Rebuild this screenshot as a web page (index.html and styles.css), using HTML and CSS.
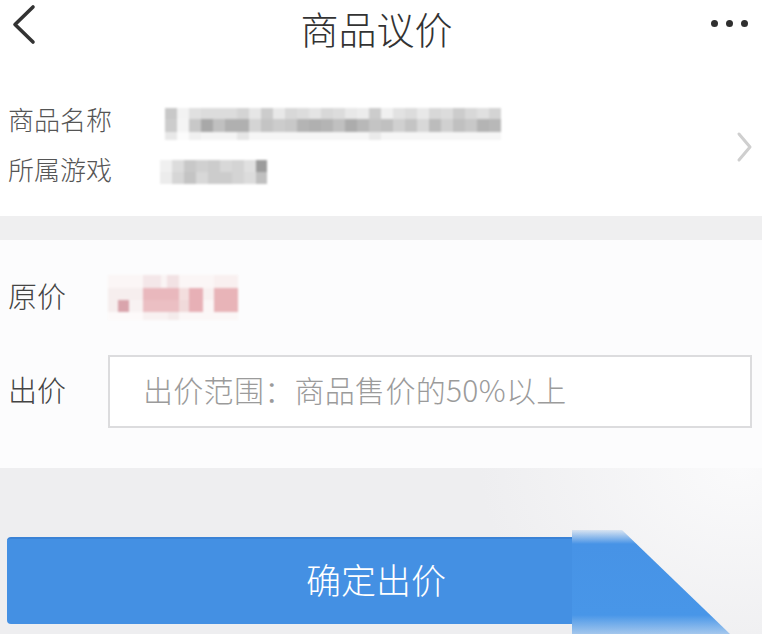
FILE: index.html
```html
<!DOCTYPE html>
<html lang="zh-CN">
<head>
<meta charset="utf-8">
<title>商品议价</title>
<link rel="stylesheet" href="styles.css">
</head>
<body>
<div class="page">
  <header class="topbar">
    <span class="back">
      <svg width="30" height="46" viewBox="0 0 30 46"><polyline points="25,3 7,20.5 25,38" fill="none" stroke="#333" stroke-width="3.6" stroke-linecap="round" stroke-linejoin="round"/></svg>
    </span>
    <h1 class="title">商品议价</h1>
    <span class="more">
      <i></i><i></i><i></i>
    </span>
  </header>

  <section class="info">
    <div class="info-rows">
      <div class="row">
        <span class="label">商品名称</span>
        <span class="mosaic name-mosaic"><b class="r1"></b><b class="r2"></b><b class="r3"></b></span>
      </div>
      <div class="row">
        <span class="label">所属游戏</span>
        <span class="mosaic game-mosaic"><b class="r1"></b><b class="r2"></b></span>
      </div>
    </div>
    <svg class="arrow" width="20" height="32" viewBox="0 0 20 32"><polyline points="5,3 16,16 5,29" fill="none" stroke="#cfcfcf" stroke-width="3" stroke-linecap="round" stroke-linejoin="round"/></svg>
  </section>

  <div class="band"></div>

  <section class="offer">
    <div class="orow price-row">
      <span class="olabel">原价</span>
      <span class="mosaic price-mosaic"><b class="r1"></b><b class="r2"></b><b class="r3"></b><b class="r4"></b></span>
    </div>
    <div class="orow">
      <span class="olabel">出价</span>
      <div class="input">出价范围：商品售价的50%以上</div>
    </div>
  </section>

  <footer class="bottom">
    <div class="submit-wrap">
      <button class="submit">确定出价</button>
      <span class="wedge"></span>
    </div>
  </footer>
</div>
</body>
</html>
```

FILE: styles.css
```css
* { box-sizing: border-box; }
html, body { margin: 0; padding: 0; }
body {
  width: 762px;
  height: 634px;
  overflow: hidden;
  font-family: "Noto Sans CJK SC", "Noto Sans", sans-serif;
  font-weight: 300;
  background: #eeeef0;
}
.page { display: flex; flex-direction: column; height: 634px; }

.topbar {
  height: 60px;
  background: #fff;
  display: flex;
  align-items: flex-start;
  justify-content: space-between;
  padding: 0 14px 0 8px;
}
.back { display: flex; width: 30px; height: 46px; margin-top: 4px; }
.title {
  margin: 0;
  font-size: 38px;
  font-weight: 300;
  color: #333;
  line-height: normal;
  position: relative;
  left: 2px;
}
.more { display: flex; gap: 8px; margin-top: 20px; }
.more i { width: 7px; height: 7px; border-radius: 50%; background: #2f2f2f; display: block; }

.info {
  background: #fff;
  padding: 36px 8px 20px 8px;
  display: flex;
  align-items: center;
  justify-content: space-between;
}
.info-rows { display: flex; flex-direction: column; }
.row { height: 50px; display: flex; align-items: center; }
.label { font-size: 26px; color: #555; width: 152px; margin-bottom: 6px; }
.arrow { margin-top: 2px; }

.mosaic { display: flex; flex-direction: column; filter: blur(1px); }
.mosaic b { display: block; }

.name-mosaic { margin-top: 6px; margin-left: 5px; }
.name-mosaic b { width: 336px; }
.name-mosaic .r1 { height: 11px; background: linear-gradient(90deg, #c8c8c8 0 12px, #f2f2f2 12px 24px, #e0e0e0 24px 36px, #dcdcdc 36px 72px, #d4d4d4 72px 84px, #e6e6e6 84px 96px, #cccccc 96px 108px, #e8e8e8 108px 120px, #d8d8d8 120px 132px, #dcdcdc 132px 144px, #e4e4e4 144px 156px, #d8d8d8 156px 168px, #dcdcdc 168px 180px, #e8e8e8 180px 192px, #ececec 192px 204px, #cccccc 204px 216px, #f0f0f0 216px 228px, #e2e2e2 228px 240px, #dcdcdc 240px 252px, #e8e8e8 252px 264px, #d8d8d8 264px 276px, #dcdcdc 276px 288px, #cccccc 288px 300px, #d8d8d8 300px 312px, #e0e0e0 312px 324px, #d4d4d4 324px 336px); }
.name-mosaic .r2 { height: 13px; background: linear-gradient(90deg, #cccccc 0 12px, #f4f4f4 12px 24px, #c8c8c8 24px 36px, #a8a8a8 36px 48px, #c0c0c0 48px 60px, #b0b0b0 60px 84px, #d4d4d4 84px 96px, #c4c4c4 96px 108px, #cccccc 108px 120px, #c8c8c8 120px 132px, #b4b4b4 132px 144px, #b0b0b0 144px 156px, #b4b4b4 156px 168px, #c0c0c0 168px 180px, #acacac 180px 192px, #b8b8b8 192px 204px, #c4c4c4 204px 216px, #c0c0c0 216px 228px, #d0d0d0 228px 240px, #c4c4c4 240px 252px, #d8d8d8 252px 264px, #bcbcbc 264px 276px, #d0d0d0 276px 288px, #c0c0c0 288px 300px, #c8c8c8 300px 312px, #b4b4b4 312px 324px, #b8b8b8 324px 336px); }
.name-mosaic .r3 { height: 8px; background: linear-gradient(90deg, #e8e8e8 0 12px, #fcfcfc 12px 24px, #f0f0f0 24px 36px, #f4f4f4 36px 72px, #e6e6e6 72px 84px, #f6f6f6 84px 204px, #eaeaea 204px 216px, #f6f6f6 216px 336px); }

.game-mosaic { margin-left: 0; margin-top: 2px; }
.game-mosaic b { width: 107px; }
.game-mosaic .r1 { height: 12px; background: linear-gradient(90deg, #f0f0f0 0 12px, #dcdcdc 12px 24px, #c8c8c8 24px 36px, #d0d0d0 36px 48px, #cccccc 48px 60px, #d8d8d8 60px 72px, #d4d4d4 72px 84px, #e0e0e0 84px 96px, #9c9c9c 96px 107px); }
.game-mosaic .r2 { height: 12px; background: linear-gradient(90deg, #ececec 0 12px, #d6d6d6 12px 24px, #c4c4c4 24px 36px, #d8d8d8 36px 48px, #cccccc 48px 72px, #d4d4d4 72px 84px, #dcdcdc 84px 96px, #c0c0c0 96px 107px); }

.band { height: 24px; background: #efeff0; }

.offer {
  background: #fcfcfd;
  padding: 32px 10px 40px 8px;
  display: flex;
  flex-direction: column;
  gap: 33px;
}
.orow { display: flex; align-items: center; }
.price-row { height: 50px; }
.olabel { font-size: 29px; color: #444; width: 100px; margin-bottom: 5px; }
.price-mosaic b { width: 130px; }
.price-mosaic .r1 { height: 13px; background: linear-gradient(90deg, #fbf6f6 0 35px, #f4e7e9 35px 53px, #faf4f4 53px 59px, #f2e2e4 59px 71px, #fbf6f6 71px 106px, #f9f0f0 106px 130px); }
.price-mosaic .r2 { height: 12px; background: linear-gradient(90deg, #f6eeee 0 35px, #e9b8bd 35px 71px, #f3dede 71px 81px, #e7b0b6 81px 95px, #f8f0f0 95px 106px, #e8b4b8 106px 130px); }
.price-mosaic .r3 { height: 12px; background: linear-gradient(90deg, #f6eeee 0 10px, #d9a4ac 10px 21px, #f8f2f2 21px 35px, #ebbfc3 35px 71px, #f0dada 71px 81px, #e7b0b6 81px 95px, #fbf6f6 95px 106px, #e8b4b8 106px 130px); }
.price-mosaic .r4 { height: 8px; background: linear-gradient(90deg, #fdfafa 0 35px, #f8f1f1 35px 60px, #f4ebeb 60px 71px, #fbf7f7 71px 130px); }

.input {
  flex: 1;
  height: 73px;
  border: 2px solid #dcdcde;
  background: #fff;
  display: flex;
  align-items: center;
  padding: 0 0 6px 33px;
  font-size: 30px;
  letter-spacing: 0.3px;
  color: #9b9b9b;
}

.bottom {
  flex: 1;
  background: radial-gradient(ellipse 260px 200px at 740px 0, #fafafb 0%, #eeeef0 100%);
  padding: 69px 0 0 7px;
}
.submit-wrap { position: relative; width: 738px; height: 87px; }
.submit {
  display: block;
  width: 738px;
  height: 87px;
  border: 0;
  border-top: 2px solid #3a82d6;
  border-radius: 4px;
  background: #4490e3;
  color: #fff;
  font-family: inherit;
  font-weight: 300;
  font-size: 35px;
  padding: 0 0 6px 0;
  clip-path: inset(0 173px 0 0);
}
.wedge {
  position: absolute;
  left: 565px;
  top: -7px;
  width: 165px;
  height: 104px;
  background: linear-gradient(180deg, rgba(68,144,227,0.15) 0px, #4793e6 14px, #4896e8 85px, rgba(72,150,232,0.45) 100%);
  clip-path: polygon(0 0, 50px 0, 158px 104px, 0 104px);
}
```
